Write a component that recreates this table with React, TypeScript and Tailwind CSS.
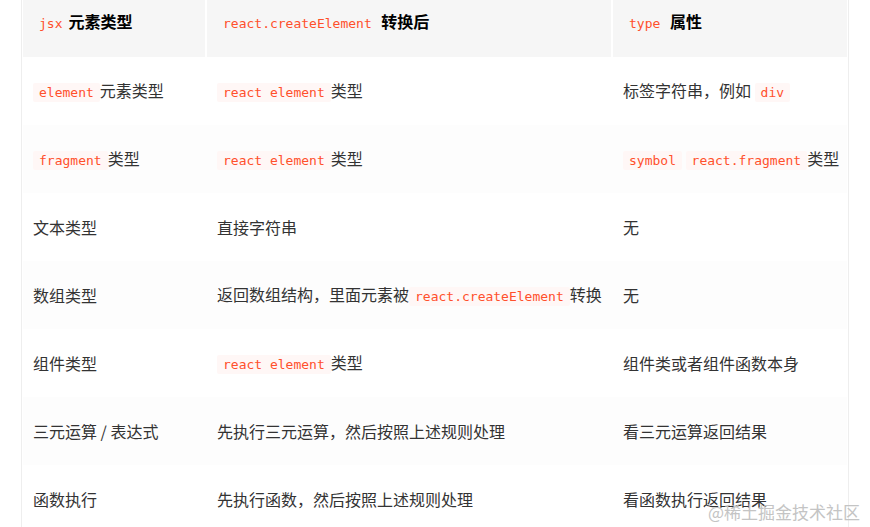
import type { ReactNode } from 'react';

const Code = ({ children, plain = false }: { children: ReactNode; plain?: boolean }) => (
  <code
    className={
      plain
        ? 'px-[6px] font-["DejaVu_Sans_Mono","Liberation_Mono",monospace] text-[13px] font-normal text-[#ff502c]'
        : 'rounded-[2px] bg-[#fff7f6] px-[6px] py-[2px] font-["DejaVu_Sans_Mono","Liberation_Mono",monospace] text-[13px] text-[#ff502c]'
    }
  >
    {children}
  </code>
);

type Row = [ReactNode, ReactNode, ReactNode];

const rows: Row[] = [
  [
    <>
      <Code>element</Code>元素类型
    </>,
    <>
      <Code>react element</Code>类型
    </>,
    <>
      标签字符串，例如 <Code>div</Code>
    </>,
  ],
  [
    <>
      <Code>fragment</Code>类型
    </>,
    <>
      <Code>react element</Code>类型
    </>,
    <>
      <Code>symbol</Code> <Code>react.fragment</Code>类型
    </>,
  ],
  ['文本类型', '直接字符串', '无'],
  [
    '数组类型',
    <>
      返回数组结构，里面元素被<Code>react.createElement</Code>转换
    </>,
    '无',
  ],
  [
    '组件类型',
    <>
      <Code>react element</Code>类型
    </>,
    '组件类或者组件函数本身',
  ],
  ['三元运算 / 表达式', '先执行三元运算，然后按照上述规则处理', '看三元运算返回结果'],
  ['函数执行', '先执行函数，然后按照上述规则处理', '看函数执行返回结果'],
];

const cols = 'grid grid-cols-[182px_404px_234px] gap-x-[2px]';

export default function App() {
  return (
    <div className='relative h-[527px] w-[870px] overflow-hidden bg-white font-["Noto_Sans_CJK_SC","Noto_Sans",sans-serif] text-[16px] leading-[26px] text-[#333]'>
      <div className="ml-[21px] w-[828px] border-x border-[#eeeeee] px-px">
        <div className={`${cols} h-[57px]`}>
          {[
            <>
              <Code plain>jsx</Code>元素类型
            </>,
            <>
              <Code plain>react.createElement</Code> 转换后
            </>,
            <>
              <Code plain>type</Code> 属性
            </>,
          ].map((cell, i) => (
            <div
              key={i}
              className="flex items-center whitespace-nowrap bg-[#f6f6f6] pb-[13px] pl-[10px] font-bold text-black"
            >
              <span>{cell}</span>
            </div>
          ))}
        </div>
        {rows.map((row, r) => (
          <div key={r} className={`${cols} h-[68px] ${r % 2 === 1 ? 'bg-[#fdfdfd]' : 'bg-white'}`}>
            {row.map((cell, c) => (
              <div key={c} className="flex items-center whitespace-nowrap pl-[10px]">
                <span>{cell}</span>
              </div>
            ))}
          </div>
        ))}
      </div>
      <div className="absolute right-[10px] bottom-[4px] text-[17px] leading-[22px] text-[#c4c4c4]">
        @稀土掘金技术社区
      </div>
    </div>
  );
}
